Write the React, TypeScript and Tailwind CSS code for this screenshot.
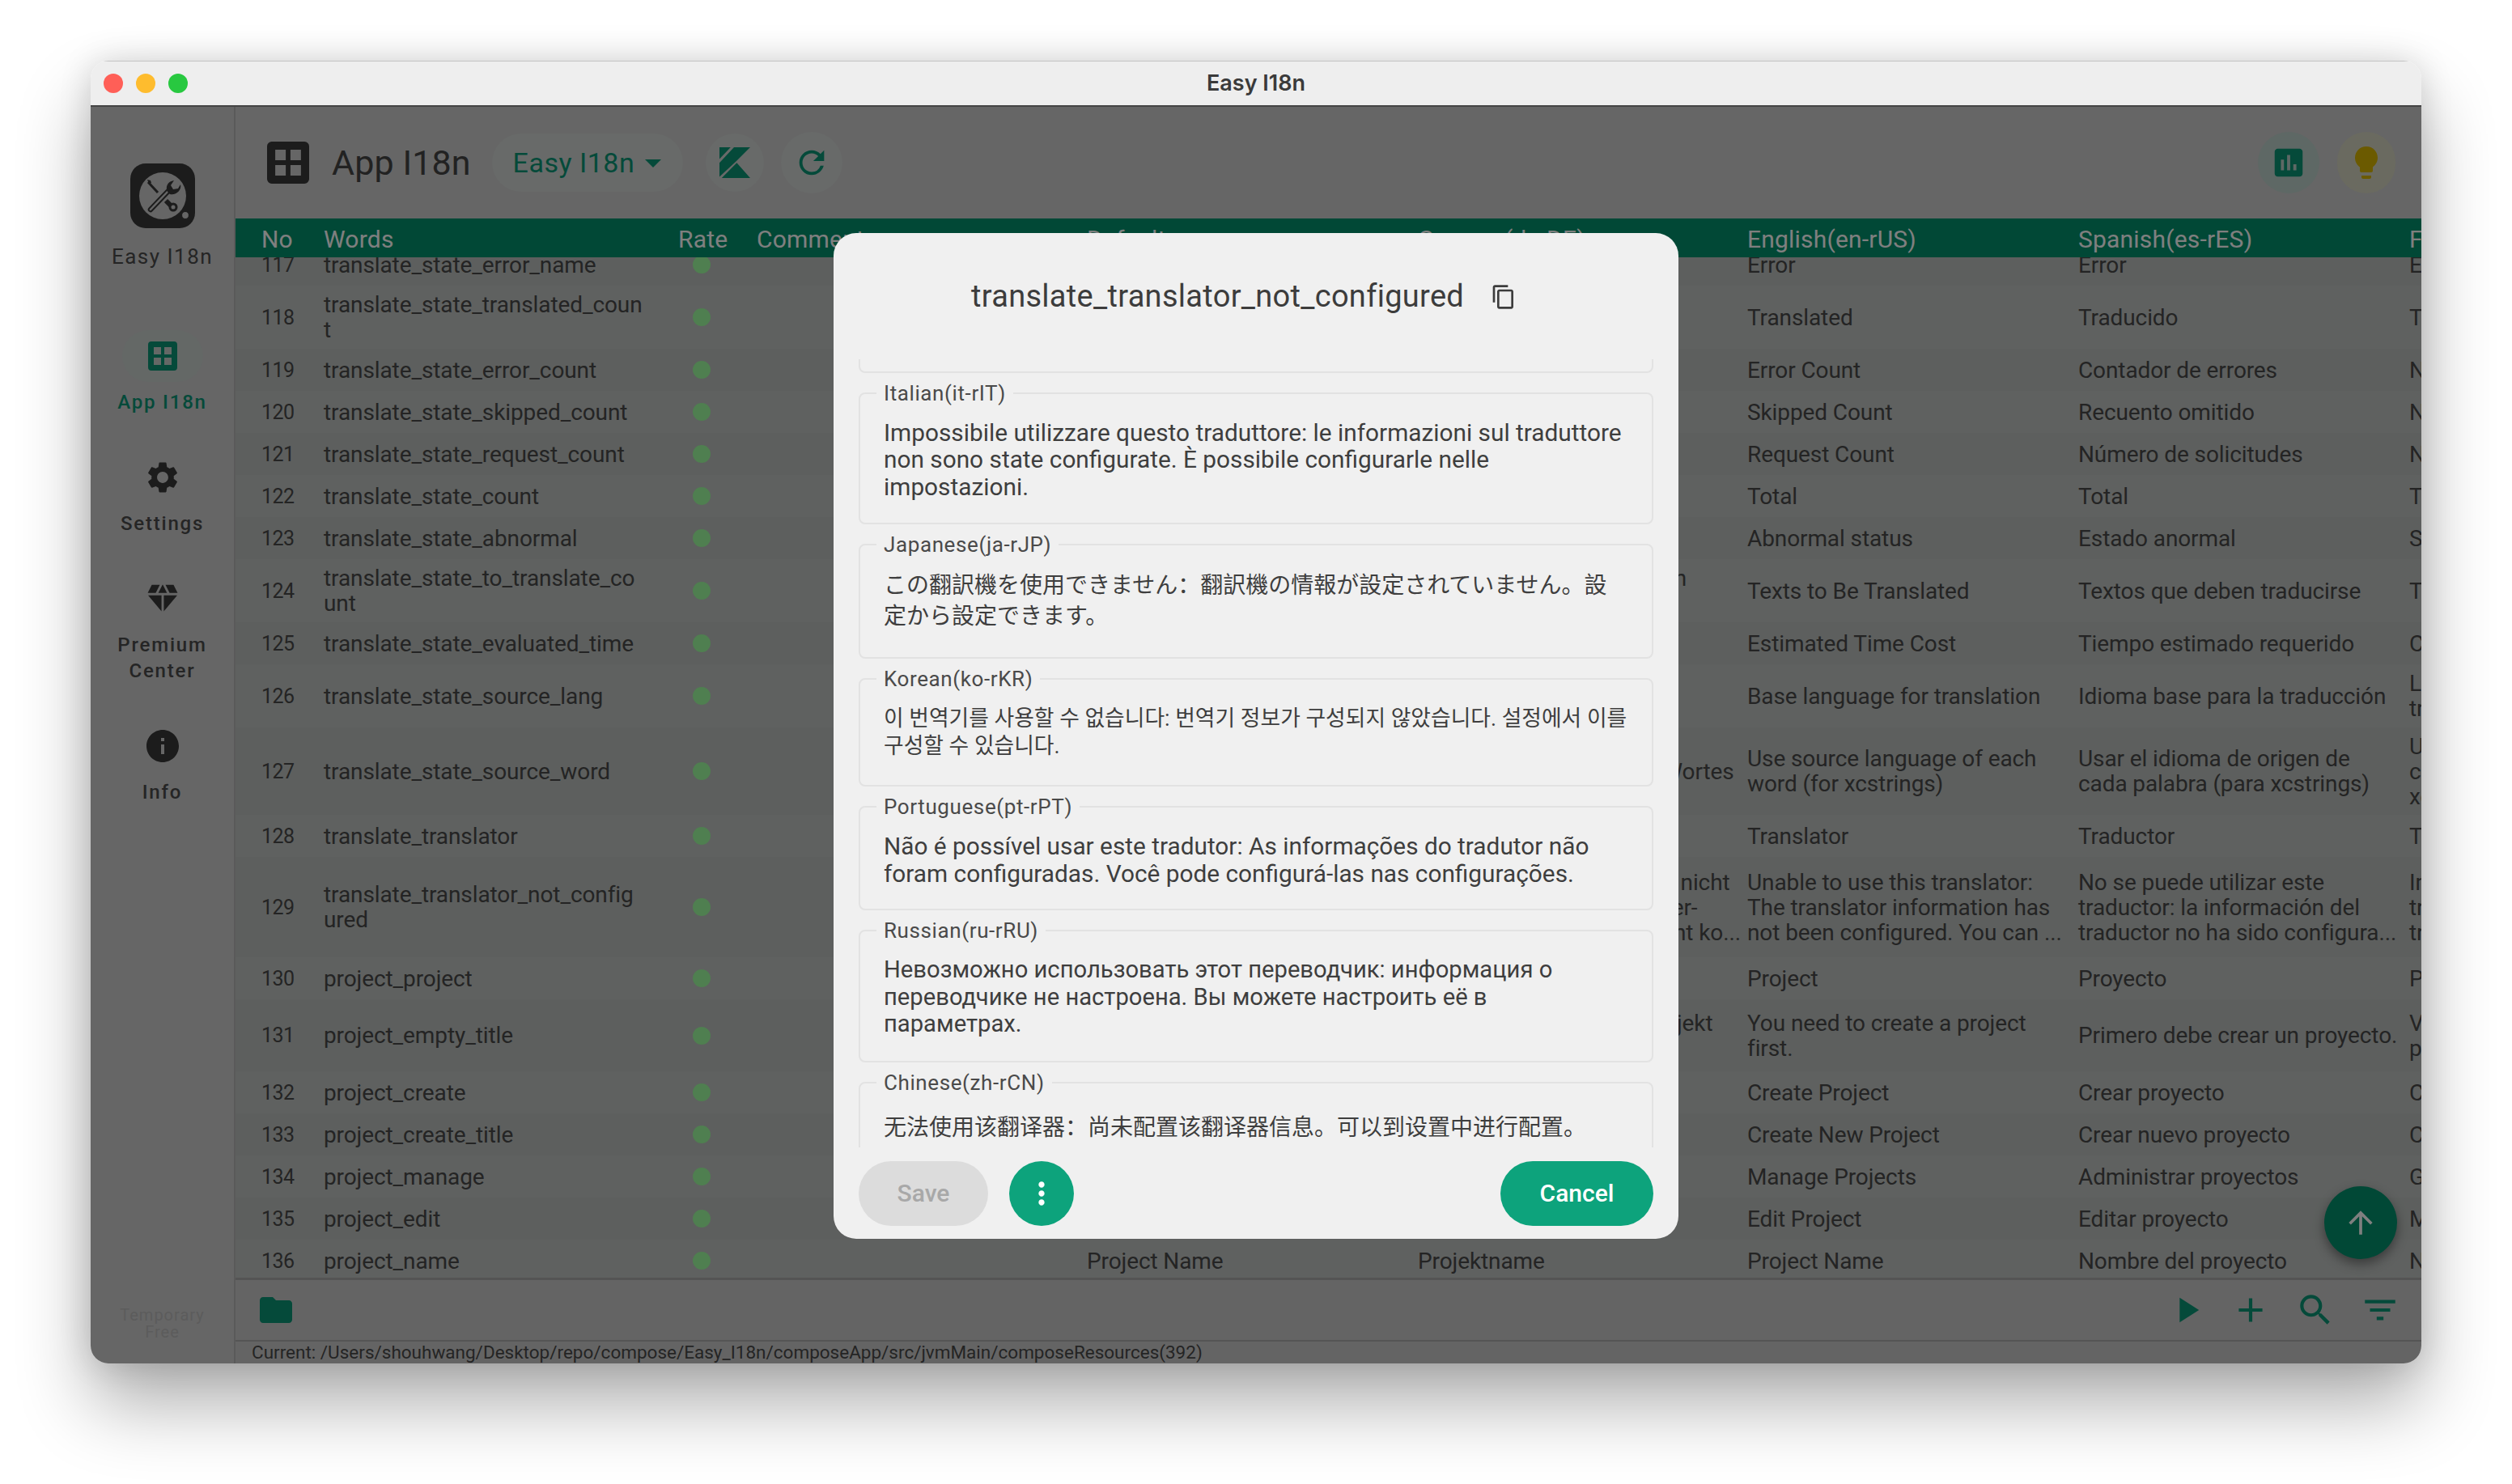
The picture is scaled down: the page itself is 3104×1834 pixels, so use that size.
import { MdSettings, MdInfo, MdDiamond, MdLightbulb, MdPoll, MdRefresh, MdArrowUpward, MdOutlineContentCopy, MdMoreVert, MdFolder, MdPlayArrow, MdAdd, MdSearch, MdFilterList, MdArrowDropDown } from 'react-icons/md';

type Row = { no: number; word: string; en: string; es: string; fr: string; de?: string; def?: string; h: string };

const rows: Row[] = [
  { no: 117, word: 'translate_state_error_name', en: 'Error', es: 'Error', fr: 'Erreur', h: 'h-[52px]' },
  { no: 118, word: 'translate_state_translated_count', en: 'Translated', es: 'Traducido', fr: 'Traduit', h: 'h-[78px]' },
  { no: 119, word: 'translate_state_error_count', en: 'Error Count', es: 'Contador de errores', fr: "Nombre d'erreurs", h: 'h-[52px]' },
  { no: 120, word: 'translate_state_skipped_count', en: 'Skipped Count', es: 'Recuento omitido', fr: 'Nombre ignoré', h: 'h-[52px]' },
  { no: 121, word: 'translate_state_request_count', en: 'Request Count', es: 'Número de solicitudes', fr: 'Nombre de requêtes', h: 'h-[52px]' },
  { no: 122, word: 'translate_state_count', en: 'Total', es: 'Total', fr: 'Total', h: 'h-[52px]' },
  { no: 123, word: 'translate_state_abnormal', en: 'Abnormal status', es: 'Estado anormal', fr: 'Statut anormal', h: 'h-[52px]' },
  { no: 124, word: 'translate_state_to_translate_count', en: 'Texts to Be Translated', es: 'Textos que deben traducirse', fr: 'Textes à traduire', de: 'Liste der zu übersetzenden\nTexte', h: 'h-[78px]' },
  { no: 125, word: 'translate_state_evaluated_time', en: 'Estimated Time Cost', es: 'Tiempo estimado requerido', fr: 'Coût estimé', h: 'h-[52px]' },
  { no: 126, word: 'translate_state_source_lang', en: 'Base language for translation', es: 'Idioma base para la traducción', fr: 'Langue de base\ntraduction', h: 'h-[78px]' },
  { no: 127, word: 'translate_state_source_word', en: 'Use source language of each\nword (for xcstrings)', es: 'Usar el idioma de origen de\ncada palabra (para xcstrings)', fr: 'Utiliser la langue\nchaque mot\nxcstrings', de: 'Verwenden Sie die\nAusgangssprache jedes Wortes\n(für xcstrings)', h: 'h-[108px]' },
  { no: 128, word: 'translate_translator', en: 'Translator', es: 'Traductor', fr: 'Traducteur', h: 'h-[52px]' },
  { no: 129, word: 'translate_translator_not_config\nured', en: 'Unable to use this translator:\nThe translator information has\nnot been configured. You can ...', es: 'No se puede utilizar este\ntraductor: la información del\ntraductor no ha sido configura...', fr: 'Impossible\ntraducteur\ntraducteur', de: 'Der Übersetzer kann noch nicht\nnutzbar bleiben. Übersetzer-\nInformationen wurden nicht ko...', h: 'h-[124px]' },
  { no: 130, word: 'project_project', en: 'Project', es: 'Proyecto', fr: 'Projet', h: 'h-[52px]' },
  { no: 131, word: 'project_empty_title', en: 'You need to create a project\nfirst.', es: 'Primero debe crear un proyecto.', fr: 'Vous devez\nprojet', de: 'Sie müssen zuerst ein Projekt\nerstellen.', h: 'h-[89px]' },
  { no: 132, word: 'project_create', en: 'Create Project', es: 'Crear proyecto', fr: 'Créer un projet', h: 'h-[52px]' },
  { no: 133, word: 'project_create_title', en: 'Create New Project', es: 'Crear nuevo proyecto', fr: 'Créer un projet', h: 'h-[52px]' },
  { no: 134, word: 'project_manage', en: 'Manage Projects', es: 'Administrar proyectos', fr: 'Gérer les projets', h: 'h-[52px]' },
  { no: 135, word: 'project_edit', en: 'Edit Project', es: 'Editar proyecto', fr: 'Modifier le projet', h: 'h-[52px]' },
  { no: 136, word: 'project_name', en: 'Project Name', es: 'Nombre del proyecto', fr: 'Nom du projet', de: 'Projektname', def: 'Project Name', h: 'h-[52px]' },
];

const fields = [
  { label: 'Italian(it-rIT)', text: 'Impossibile utilizzare questo traduttore: le informazioni sul traduttore non sono state configurate. È possibile configurarle nelle impostazioni.', cls: 'text-[29.8px] pr-[24px] leading-[33.5px] pb-[28px]' },
  { label: 'Japanese(ja-rJP)', text: 'この翻訳機を使用できません：翻訳機の情報が設定されていません。設定から設定できます。', cls: "text-[28px] pr-[46px] font-['Roboto','Noto_Sans_CJK_SC',sans-serif] leading-[38px] pb-[31px]" },
  { label: 'Korean(ko-rKR)', text: '이 번역기를 사용할 수 없습니다: 번역기 정보가 구성되지 않았습니다. 설정에서 이를 구성할 수 있습니다.', cls: "text-[26.8px] pr-[16px] break-keep font-['Roboto','Noto_Sans_CJK_KR',sans-serif] leading-[34px] pb-[31px]" },
  { label: 'Portuguese(pt-rPT)', text: 'Não é possível usar este tradutor: As informações do tradutor não foram configuradas. Você pode configurá-las nas configurações.', cls: 'text-[29.8px] pr-[24px] leading-[33.5px] pb-[27px]' },
  { label: 'Russian(ru-rRU)', text: 'Невозможно использовать этот переводчик: информация о переводчике не настроена. Вы можете настроить её в параметрах.', cls: 'text-[29.2px] pr-[40px] leading-[33.5px] pb-[28px]' },
  { label: 'Chinese(zh-rCN)', text: '无法使用该翻译器：尚未配置该翻译器信息。可以到设置中进行配置。', cls: "text-[28px] pr-[24px] font-['Roboto','Noto_Sans_CJK_SC',sans-serif] leading-[48px] pb-[27px]" },
];

function GridIcon({ className }: { className: string }) {
  return (
    <svg viewBox="0 0 36 36" className={className}>
      <path fillRule="evenodd" fill="currentColor" d="M4 0h28a4 4 0 0 1 4 4v28a4 4 0 0 1-4 4H4a4 4 0 0 1-4-4V4a4 4 0 0 1 4-4zM7 7v9h9V7zM20 7v9h9V7zM7 20v9h9v-9zM20 20v9h9v-9z" />
    </svg>
  );
}

function AppLogo() {
  return (
    <svg viewBox="0 0 80 80" className="w-[80px] h-[80px]">
      <rect width="80" height="80" rx="19" fill="#383838" />
      <circle cx="40" cy="40" r="29" fill="#cccccc" />
      {/* screwdriver */}
      <path d="M22 23 34 36" stroke="#383838" strokeWidth="3" fill="none" />
      <path d="M21 20l4 1 1 3-3 1z" fill="#383838" />
      <path d="M44 46l6 6" stroke="#383838" strokeWidth="6" fill="none" />
      <circle cx="53" cy="54" r="5.5" fill="#383838" />
      <circle cx="53" cy="54" r="2.5" fill="#cccccc" />
      {/* wrench */}
      <path d="M25 57 48 33" stroke="#383838" strokeWidth="6.5" strokeLinecap="round" fill="none" />
      <path d="M25 57 46 35" stroke="#cccccc" strokeWidth="2.5" strokeLinecap="round" fill="none" />
      <path d="M46 35c-3-6 0-13 8-14l-4 6 3 5 6-1 3-5c2 7-6 14-13 12z" fill="#383838" />
      <circle cx="68" cy="64" r="4.5" fill="#cccccc" stroke="#383838" strokeWidth="1.2" />
    </svg>
  );
}

function KLogo() {
  return (
    <svg viewBox="0 0 110 110" className="w-[38px] h-[38px] text-[#0a9474]">
      <path fill="currentColor" d="M0 0h40L0 42zM52 0h58L60 50 0 106V56zM62 56l48 54H8z" />
    </svg>
  );
}

function NavItem({ icon, label, active }: { icon: React.ReactNode; label: React.ReactNode; active?: boolean }) {
  return (
    <div className="flex flex-col items-center">
      <div className={`w-[100px] h-[64px] rounded-full flex items-center justify-center ${active ? 'bg-[#c9d0cd] text-[#0a9474]' : 'text-[#383838]'}`}>{icon}</div>
      <div className={`mt-[9px] text-center text-[24px] leading-[32px] font-medium tracking-[1.8px] ${active ? 'text-[#0a9474]' : 'text-[#4a4a4a]'}`}>{label}</div>
    </div>
  );
}

function Sidebar() {
  return (
    <div className="w-[179px] shrink-0 bg-[#cccccc] border-r-2 border-[#b4b4b4] flex flex-col items-center pt-[70px]">
      <AppLogo />
      <div className="mt-[18px] text-[26px] leading-[34px] tracking-[1.5px] text-[#4a4a4a]">Easy I18n</div>
      <div className="mt-[74px] flex flex-col items-center gap-[45px]">
        <NavItem active icon={<GridIcon className="w-[36px] h-[36px]" />} label="App I18n" />
        <NavItem icon={<MdSettings className="w-[46px] h-[46px]" />} label="Settings" />
        <NavItem icon={<MdDiamond className="w-[46px] h-[46px]" />} label={<>Premium<br />Center</>} />
        <NavItem icon={<MdInfo className="w-[48px] h-[48px]" />} label="Info" />
      </div>
      <div className="mt-auto mb-[28px] text-center text-[20px] leading-[21px] tracking-[1px] text-[#b8b8b8]">Temporary<br />Free</div>
    </div>
  );
}

function TopBar() {
  return (
    <div className="h-[138px] shrink-0 bg-[#cccccc] flex items-center pl-[39px] pr-[32px]">
      <GridIcon className="w-[52px] h-[52px] text-[#383838]" />
      <div className="ml-[28px] text-[43px] tracking-[0.1px] text-[#444444]">App I18n</div>
      <div className="ml-[26px] h-[72px] w-[236px] rounded-full bg-[#d0d4d2] flex items-center pl-[26px] text-[34px] tracking-[0.5px] text-[#0a9474]">
        Easy I18n
        <MdArrowDropDown className="w-[48px] h-[48px] -ml-[1px]" />
      </div>
      <div className="ml-[28px] w-[72px] h-[72px] rounded-full bg-[#d0d4d2] flex items-center justify-center"><KLogo /></div>
      <div className="ml-[21px] w-[76px] h-[76px] rounded-full bg-[#d0d4d2] flex items-center justify-center"><MdRefresh className="w-[46px] h-[46px] text-[#0a9474]" /></div>
      <div className="ml-auto w-[76px] h-[76px] rounded-full bg-[#bcd0ca] flex items-center justify-center"><MdPoll className="w-[46px] h-[46px] text-[#0a9474]" /></div>
      <div className="ml-[22px] w-[72px] h-[76px] rounded-full bg-[#d4d4c0] flex items-center justify-center"><MdLightbulb className="w-[48px] h-[48px] text-[#d6b400]" /></div>
    </div>
  );
}

function TableHead() {
  return (
    <div className="h-[48px] shrink-0 bg-[#02906c] flex items-center pt-[2px] pl-[32px] text-[30px] tracking-[0.2px] text-white whitespace-nowrap overflow-hidden">
      <div className="w-[77px] shrink-0">No</div>
      <div className="w-[438px] shrink-0">Words</div>
      <div className="w-[97px] shrink-0">Rate</div>
      <div className="w-[408px] shrink-0">Comment</div>
      <div className="w-[409px] shrink-0">Default</div>
      <div className="w-[407px] shrink-0">German(de-DE)</div>
      <div className="w-[409px] shrink-0">English(en-rUS)</div>
      <div className="w-[409px] shrink-0">Spanish(es-rES)</div>
      <div className="shrink-0">French(fr-rFR)</div>
    </div>
  );
}

function TableRow({ row, odd }: { row: Row; odd: boolean }) {
  return (
    <div className={`${row.h} ${odd ? 'bg-[#babfbc]' : 'bg-[#bec2c0]'} flex items-center pl-[32px] text-[28px] leading-[31px] tracking-[-0.1px] text-[#484848] whitespace-pre-line overflow-hidden`}>
      <div className="w-[77px] shrink-0 pr-[42px] text-center text-[25px] tracking-[-0.6px]">{row.no}</div>
      <div className="w-[438px] shrink-0 pr-[40px] break-all">{row.word}</div>
      <div className="w-[97px] shrink-0 pl-[18px]"><div className="w-[22px] h-[22px] rounded-full bg-[#9efea0]" /></div>
      <div className="w-[408px] shrink-0" />
      <div className="w-[409px] shrink-0">{row.def}</div>
      <div className="w-[407px] shrink-0 whitespace-pre">{row.de}</div>
      <div className="w-[409px] shrink-0 whitespace-pre">{row.en}</div>
      <div className="w-[409px] shrink-0 whitespace-pre">{row.es}</div>
      <div className="shrink-0 whitespace-pre">{row.fr}</div>
    </div>
  );
}

function BottomBar() {
  return (
    <div className="h-[77px] shrink-0 bg-[#c8c8c8] border-t-[3px] border-[#a8a8a8] flex items-center pl-[26px] pr-[26px] text-[#0a9474]">
      <MdFolder className="w-[48px] h-[48px]" />
      <MdPlayArrow className="ml-auto w-[52px] h-[52px]" />
      <MdAdd className="ml-[28px] w-[50px] h-[50px]" />
      <MdSearch className="ml-[30px] w-[50px] h-[50px]" />
      <MdFilterList className="ml-[30px] w-[50px] h-[50px]" />
    </div>
  );
}

function Field({ label, text, cls }: { label: string; text: string; cls: string }) {
  return (
    <div className={`relative shrink-0 border-2 border-[#e2e2e2] rounded-[8px] pt-[31px] pl-[29px] text-[#3e3e3e] ${cls}`}>
      <span className="absolute -top-[17px] left-[20px] px-[9px] bg-[#f0f0f0] font-['Roboto',sans-serif] text-[26px] leading-[32px] tracking-[0.6px] text-[#4a4a4a]">{label}</span>
      {text}
    </div>
  );
}

function Dialog() {
  return (
    <div className="w-[1044px] h-[1243px] rounded-[28px] bg-[#f0f0f0] flex flex-col">
      <div className="h-[156px] shrink-0 flex items-center pl-[170px] pt-[2px] text-[38px] tracking-[0.3px] text-[#3c3c3c]">
        translate_translator_not_configured
        <MdOutlineContentCopy className="ml-[33px] w-[32px] h-[32px]" />
      </div>
      <div className="mx-[31px] h-[974px] overflow-hidden">
        <div className="flex flex-col gap-[24px]">
          <div className="h-[102px] -mt-[85px] shrink-0 border-2 border-[#e2e2e2] rounded-[8px]" />
          {fields.map(f => <Field key={f.label} {...f} />)}
        </div>
      </div>
      <div className="mx-[31px] mt-[17px] flex items-center">
        <div className="w-[160px] h-[80px] rounded-full bg-[#dcdcdc] flex items-center justify-center text-[30px] font-medium text-[#a8a8a8]">Save</div>
        <div className="ml-[26px] w-[80px] h-[80px] rounded-full bg-[#0da37c] flex items-center justify-center text-white"><MdMoreVert className="w-[44px] h-[44px]" /></div>
        <div className="ml-auto w-[189px] h-[80px] rounded-full bg-[#0da37c] flex items-center justify-center text-[30px] font-medium text-white">Cancel</div>
      </div>
    </div>
  );
}

export default function App() {
  return (
    <div className="min-h-[1834px] bg-white pt-[75px] pl-[112px] font-['Roboto','Noto_Sans_CJK_SC',sans-serif]">
      <div className="w-[2880px] h-[1610px] rounded-[22px] overflow-hidden flex flex-col shadow-[0_50px_90px_rgba(0,0,0,0.32),0_0_40px_rgba(0,0,0,0.14)]">
        {/* title bar */}
        <div className="h-[57px] shrink-0 bg-[#eeeeee] border-t border-b-2 border-t-[#c4c4c4] border-b-[#444444] flex items-center relative">
          <div className="flex gap-[16px] pl-[16px]">
            <div className="w-[24px] h-[24px] rounded-full bg-[#ff5f57]" />
            <div className="w-[24px] h-[24px] rounded-full bg-[#febc2e]" />
            <div className="w-[24px] h-[24px] rounded-full bg-[#28c840]" />
          </div>
          <div className="absolute inset-x-0 text-center text-[27px] font-semibold text-[#3a3a3a] font-['Inter',sans-serif]">Easy I18n</div>
        </div>
        <div className="relative flex-1 flex min-h-0">
          <Sidebar />
          <div className="flex-1 min-w-0 flex flex-col overflow-hidden">
            <TopBar />
            <TableHead />
            <div className="flex-1 min-h-0 overflow-hidden">
              <div className="-mt-[17px]">
                {rows.map((r, i) => <TableRow key={r.no} row={r} odd={i % 2 === 0} />)}
              </div>
            </div>
            <BottomBar />
            <div className="h-[29px] shrink-0 bg-[#c8c8c8] border-t-[2px] border-[#aaaaaa] pl-[20px] text-[22.5px] leading-[27px] text-[#484848]">
              Current: /Users/shouhwang/Desktop/repo/compose/Easy_I18n/composeApp/src/jvmMain/composeResources(392)
            </div>
          </div>
          {/* scroll to top */}
          <div className="absolute right-[30px] bottom-[129px] w-[90px] h-[90px] rounded-full bg-[#02906c] flex items-center justify-center text-white shadow-[0_6px_14px_rgba(0,0,0,0.4)]">
            <MdArrowUpward className="w-[44px] h-[44px]" />
          </div>
          <div className="absolute inset-0 pt-[1px] bg-black/50 flex items-center justify-center">
            <Dialog />
          </div>
        </div>
      </div>
    </div>
  );
}
